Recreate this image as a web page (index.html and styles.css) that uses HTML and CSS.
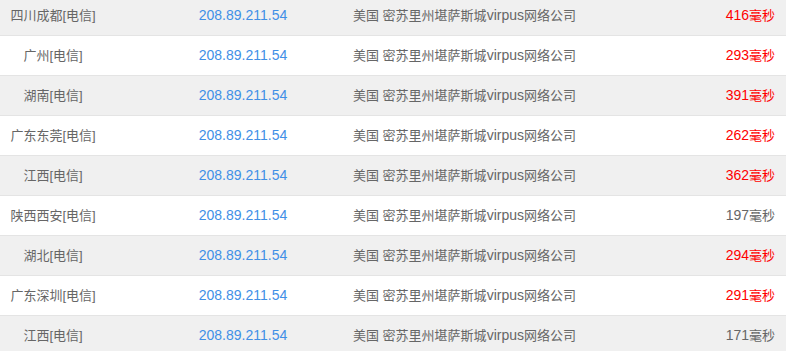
FILE: index.html
```html
<!DOCTYPE html>
<html lang="zh">
<head>
<meta charset="utf-8">
<link rel="stylesheet" href="styles.css">
</head>
<body>
<div class="table">
  <div class="row"><span class="name">四川成都[电信]</span><span class="ip">208.89.211.54</span><span class="loc">美国 密苏里州堪萨斯城<span class="latin">virpus</span>网络公司</span><span class="ms hot"><span class="num">416</span>毫秒</span></div>
  <div class="row"><span class="name">广州[电信]</span><span class="ip">208.89.211.54</span><span class="loc">美国 密苏里州堪萨斯城<span class="latin">virpus</span>网络公司</span><span class="ms hot"><span class="num">293</span>毫秒</span></div>
  <div class="row"><span class="name">湖南[电信]</span><span class="ip">208.89.211.54</span><span class="loc">美国 密苏里州堪萨斯城<span class="latin">virpus</span>网络公司</span><span class="ms hot"><span class="num">391</span>毫秒</span></div>
  <div class="row"><span class="name">广东东莞[电信]</span><span class="ip">208.89.211.54</span><span class="loc">美国 密苏里州堪萨斯城<span class="latin">virpus</span>网络公司</span><span class="ms hot"><span class="num">262</span>毫秒</span></div>
  <div class="row"><span class="name">江西[电信]</span><span class="ip">208.89.211.54</span><span class="loc">美国 密苏里州堪萨斯城<span class="latin">virpus</span>网络公司</span><span class="ms hot"><span class="num">362</span>毫秒</span></div>
  <div class="row"><span class="name">陕西西安[电信]</span><span class="ip">208.89.211.54</span><span class="loc">美国 密苏里州堪萨斯城<span class="latin">virpus</span>网络公司</span><span class="ms"><span class="num">197</span>毫秒</span></div>
  <div class="row"><span class="name">湖北[电信]</span><span class="ip">208.89.211.54</span><span class="loc">美国 密苏里州堪萨斯城<span class="latin">virpus</span>网络公司</span><span class="ms hot"><span class="num">294</span>毫秒</span></div>
  <div class="row"><span class="name">广东深圳[电信]</span><span class="ip">208.89.211.54</span><span class="loc">美国 密苏里州堪萨斯城<span class="latin">virpus</span>网络公司</span><span class="ms hot"><span class="num">291</span>毫秒</span></div>
  <div class="row"><span class="name">江西[电信]</span><span class="ip">208.89.211.54</span><span class="loc">美国 密苏里州堪萨斯城<span class="latin">virpus</span>网络公司</span><span class="ms"><span class="num">171</span>毫秒</span></div>
</div>
</body>
</html>
```
FILE: styles.css
```css
html, body {
  margin: 0;
  padding: 0;
  background: #fff;
  overflow: hidden;
}
body {
  font-family: "Liberation Sans", "Noto Sans CJK SC", sans-serif;
  font-size: 13px;
  color: #666;
}
.table {
  margin-top: -4px;
}
.row {
  display: grid;
  grid-template-columns: 106px 247px 1fr auto;
  height: 39px;
  line-height: 39px;
  border-bottom: 1px solid #e4e4e4;
  background: #fff;
}
.row:nth-child(odd) {
  background: #f0f0f0;
}
.name {
  text-align: center;
  white-space: nowrap;
}
.ip {
  text-align: center;
  padding-left: 27px;
  font-size: 14px;
  color: #3f8fe6;
}
.loc {
  white-space: nowrap;
}
.latin,
.num {
  font-size: 14px;
}
.ms {
  padding-right: 11px;
  text-align: right;
}
.ms.hot {
  color: #ff0000;
}
```
